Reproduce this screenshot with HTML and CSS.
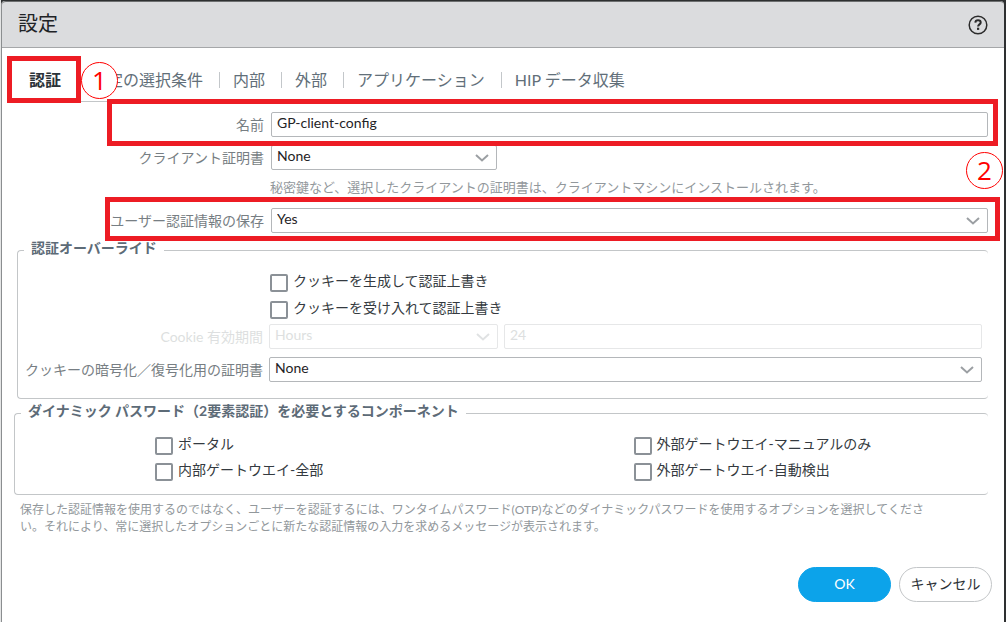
FILE: index.html
```
<!DOCTYPE html>
<html lang="ja">
  <head>
    <meta charset="UTF-8" />
    <title>設定</title>
    <link rel="stylesheet" href="styles.css">
  </head>
  <body>
    <div class="dialog">
      <header class="dialog-header">
        <h1>設定</h1>
        <button type="button" class="help" aria-label="ヘルプ">
          <svg width="20" height="20" viewBox="0 0 20 20" fill="none" stroke="#2b2b2b">
            <circle cx="10" cy="10" r="8.8" stroke-width="1.5" />
            <path d="M7.3 7.6C7.4 6 8.4 5.2 10 5.2c1.7 0 2.7.9 2.7 2.2 0 2-2.6 2-2.6 4.2" stroke-width="2" />
            <path d="M9 13.8h2.2" stroke-width="2.2" />
          </svg>
        </button>
      </header>

      <nav class="tabs">
        <a href="#auth" class="tab active">認証<span class="mark mark-tab"></span><span class="step step-one">1</span></a>
        <a href="#criteria" class="tab">設定の選択条件</a>
        <a href="#internal" class="tab">内部</a>
        <a href="#external" class="tab">外部</a>
        <a href="#app" class="tab">アプリケーション</a>
        <a href="#hip" class="tab">HIP データ収集</a>
      </nav>

      <form class="form" id="auth">
        <div class="row">
          <label for="name">名前</label>
          <input class="field" id="name" name="name" value="GP-client-config" />
          <span class="mark mark-name"></span>
        </div>

        <div class="row">
          <label for="client-cert">クライアント証明書</label>
          <div class="select short">
            <select class="field" id="client-cert" name="client_cert">
              <option>None</option>
            </select>
            <svg width="14" height="8" viewBox="0 0 14 8"><path d="M1 1l6 5.5L13 1" /></svg>
          </div>
        </div>

        <p class="hint">秘密鍵など、選択したクライアントの証明書は、クライアントマシンにインストールされます。</p>

        <div class="row">
          <label for="save-user">ユーザー認証情報の保存</label>
          <div class="select">
            <select class="field" id="save-user" name="save_user">
              <option>Yes</option>
              <option>No</option>
            </select>
            <svg width="14" height="8" viewBox="0 0 14 8"><path d="M1 1l6 5.5L13 1" /></svg>
          </div>
          <span class="mark mark-save"></span>
          <span class="step step-two">2</span>
        </div>

        <fieldset class="group override">
          <legend>認証オーバーライド</legend>
          <div class="checks">
            <label class="check"><input type="checkbox" name="generate_cookie" />クッキーを生成して認証上書き</label>
            <label class="check"><input type="checkbox" name="accept_cookie" />クッキーを受け入れて認証上書き</label>
          </div>
          <div class="row lifetime">
            <label for="lifetime-unit">Cookie 有効期間</label>
            <div class="select">
              <select class="field" id="lifetime-unit" name="lifetime_unit" disabled>
                <option>Hours</option>
              </select>
              <svg width="14" height="8" viewBox="0 0 14 8"><path d="M1 1l6 5.5L13 1" /></svg>
            </div>
            <input class="field" name="lifetime" value="24" aria-label="Cookie 有効期間の値" disabled />
          </div>
          <div class="row">
            <label for="cookie-cert">クッキーの暗号化／復号化用の証明書</label>
            <div class="select">
              <select class="field" id="cookie-cert" name="cookie_cert">
                <option>None</option>
              </select>
              <svg width="14" height="8" viewBox="0 0 14 8"><path d="M1 1l6 5.5L13 1" /></svg>
            </div>
          </div>
        </fieldset>

        <fieldset class="group components">
          <legend>ダイナミック パスワード（2要素認証）を必要とするコンポーネント</legend>
          <div class="component-grid">
            <label class="check"><input type="checkbox" name="portal" />ポータル</label>
            <label class="check"><input type="checkbox" name="ext_manual" />外部ゲートウエイ-マニュアルのみ</label>
            <label class="check"><input type="checkbox" name="int_all" />内部ゲートウエイ-全部</label>
            <label class="check"><input type="checkbox" name="ext_auto" />外部ゲートウエイ-自動検出</label>
          </div>
        </fieldset>

        <p class="note">保存した認証情報を使用するのではなく、ユーザーを認証するには、ワンタイムパスワード(OTP)などのダイナミックパスワードを使用するオプションを選択してくださ<br />い。それにより、常に選択したオプションごとに新たな認証情報の入力を求めるメッセージが表示されます。</p>

        <div class="actions">
          <button type="submit" class="btn primary">OK</button>
          <button type="button" class="btn">キャンセル</button>
        </div>
      </form>
    </div>
  </body>
</html>
```
FILE: styles.css
```
* {
  box-sizing: border-box;
}
body {
  margin: 0;
  min-height: 100vh;
  padding: 1px 2px 0 0;
  border-left: 1px solid #e4e5e5;
  background: #2e3031;
  font-family: Lato, "Noto Sans CJK JP", sans-serif;
  font-size: 14px;
  line-height: 20px;
  color: #343a40;
  display: flex;
}
.dialog {
  flex: 1;
  min-width: 0;
  background: #fff;
  border-left: 1px solid #8b8e90;
  border-radius: 4px 4px 0 0;
}
.dialog-header {
  display: flex;
  align-items: center;
  justify-content: space-between;
  height: 47px;
  padding: 0 16px;
  background: #dbdcde;
  border-top: 1px solid #6d6f70;
  border-bottom: 1px solid #a5a7a9;
  border-radius: 4px 4px 0 0;
}
h1 {
  margin: 0;
  padding-bottom: 4px;
  font-size: 20px;
  line-height: 24px;
  font-weight: normal;
  color: #1f2326;
}
.help {
  display: flex;
  padding: 0;
  border: none;
  background: none;
  cursor: pointer;
}

/* tabs */
.tabs {
  display: flex;
  align-items: center;
  height: 54px;
  margin: 0 16px 0 13px;
  padding-top: 10px;
  border-bottom: 1px solid #c3c6c8;
}
.tab {
  position: relative;
  padding: 0 16px 0 13px;
  border-left: 1px solid #c3c7ca;
  font-size: 16px;
  line-height: 16px;
  color: #626f79;
  text-decoration: none;
  white-space: nowrap;
}
.tab.active {
  color: #2b3238;
  font-weight: bold;
}
.tab:nth-child(-n + 2) {
  border-left-color: transparent;
}

/* form rows */
.form {
  padding: 10px 16px 20px 12px;
}
.row {
  position: relative;
  display: grid;
  grid-template-columns: 250px 1fr;
  column-gap: 7px;
  align-items: center;
  margin-bottom: 8px;
}
.row label {
  text-align: right;
  white-space: nowrap;
  color: #777e83;
}
.field {
  width: 100%;
  height: 25px;
  padding: 0 5px 5px;
  border: 1px solid #b4b7ba;
  border-radius: 2px;
  background: #fff;
  font-family: inherit;
  font-size: 14px;
  color: #1f2326;
  appearance: none;
}
.field:disabled {
  border-color: #e6e7e8;
  color: #dddfe0;
  opacity: 1;
}
.select {
  position: relative;
  display: flex;
}
.select.short {
  width: 226px;
}
.select svg {
  position: absolute;
  right: 8px;
  top: 9px;
  fill: none;
  stroke: #9b9fa3;
  stroke-width: 2;
  pointer-events: none;
}
.hint {
  margin: 0 0 12px 256px;
  font-size: 13px;
  line-height: 18px;
  color: #92989c;
}

/* groups */
.group {
  min-width: 0;
  margin: 0;
  padding: 0 6px 0 0;
  border: 1px solid #c3c6c8;
  border-right: none;
  border-radius: 4px;
}
.group legend {
  margin-left: 6px;
  padding: 0 7px 4px;
  line-height: 20px;
  font-weight: bold;
  color: #5d6b77;
}
.override {
  margin: -3px 0 2px 3px;
  padding-bottom: 8px;
}
.override .row {
  grid-template-columns: 245px 1fr;
  column-gap: 6px;
}
.override .lifetime {
  grid-template-columns: 245px 229px 1fr;
}
.override .lifetime label {
  color: #dddfe0;
}
.lifetime .select svg {
  stroke: #e0e2e3;
}
.checks {
  display: grid;
  row-gap: 5px;
  padding: 9px 0 4px 252px;
}
.check {
  display: flex;
  align-items: flex-end;
  gap: 5px;
  height: 22px;
  padding-bottom: 1px;
  line-height: 22px;
  white-space: nowrap;
}
.check input {
  flex: none;
  width: 18px;
  height: 18px;
  margin: 0;
  border: 2px solid #8b9197;
  border-radius: 2px;
  background: #fff;
  appearance: none;
}
.check input:checked {
  background: #0ca3ea;
}
.component-grid {
  display: grid;
  grid-template-columns: 1fr 1fr;
  row-gap: 4px;
  padding: 9px 0 12px 140px;
}
.components .check:nth-child(even) {
  padding-left: 65px;
}
.note {
  margin: 6px 0 0 6px;
  font-size: 12px;
  line-height: 17px;
  color: #92989c;
}

/* buttons */
.actions {
  display: flex;
  justify-content: flex-end;
  gap: 8px;
  margin: 32px -4px 0 0;
}
.btn {
  width: 93px;
  height: 35px;
  padding: 0 0 3px;
  border: 1px solid #c3c6c8;
  border-radius: 18px;
  background: #fff;
  font-family: inherit;
  font-size: 14px;
  color: #2c3136;
  cursor: pointer;
}
.btn.primary {
  border-color: #0ca3ea;
  background: #0ca3ea;
  color: #fff;
}

/* callouts over the form */
.mark {
  position: absolute;
  z-index: 1;
  border: 5px solid #ed1c24;
  pointer-events: none;
}
.mark-tab {
  inset: -16px -4px -15px -9px;
}
.mark-name {
  inset: -13px -10px -9px 93px;
}
.mark-save {
  inset: -11px -12px -8px 91px;
}
.step {
  position: absolute;
  z-index: 2;
  width: 37px;
  height: 37px;
  border: 1px solid #f00;
  border-radius: 50%;
  background: #fff;
  font-family: "Open Sans", sans-serif;
  font-size: 26px;
  line-height: 35px;
  font-weight: normal;
  text-align: center;
  color: #f00;
}
.step-one {
  left: 65px;
  top: -10px;
}
.step-two {
  right: -15px;
  top: -56px;
}
```
